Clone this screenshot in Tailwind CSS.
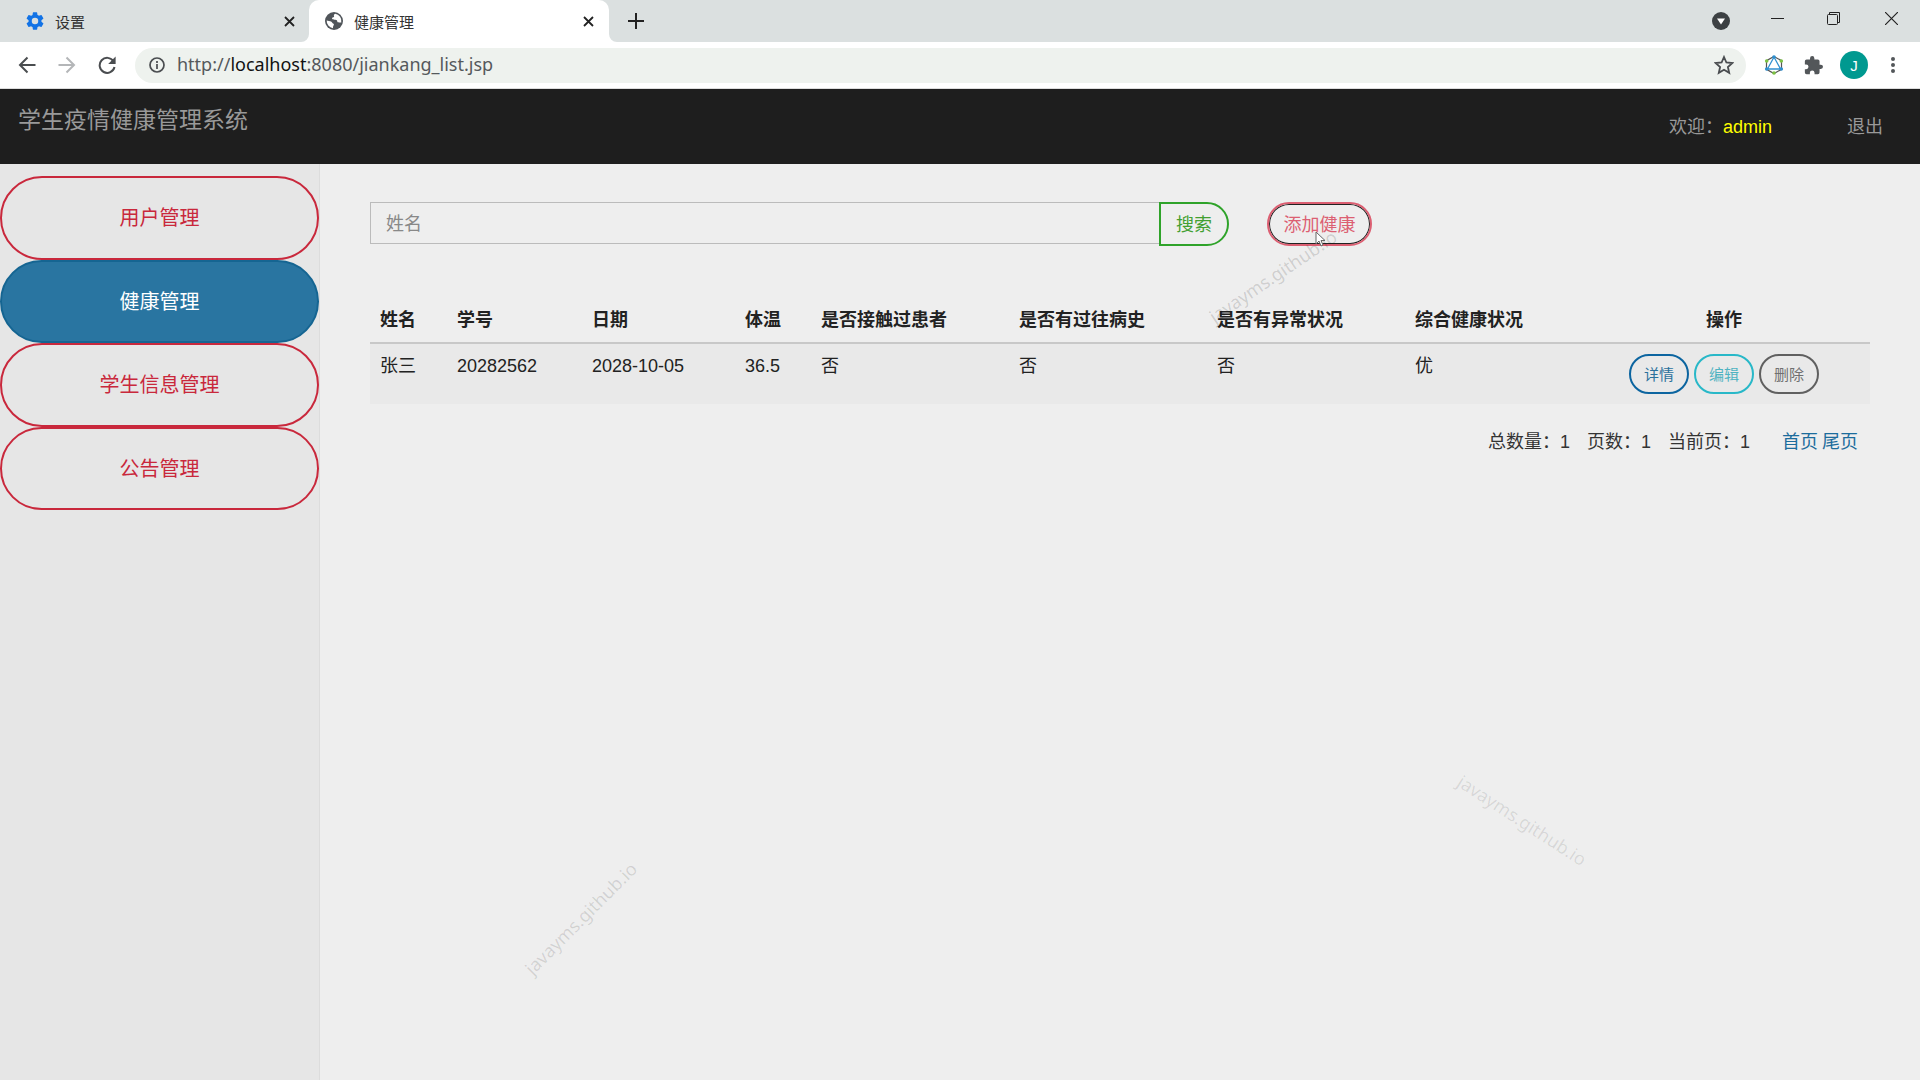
<!DOCTYPE html>
<html lang="zh-CN">
<head>
<meta charset="utf-8">
<title>健康管理</title>
<script src="https://cdn.jsdelivr.net/npm/@tailwindcss/browser@4"></script>
</head>
<body class="relative flex min-h-screen flex-col overflow-x-hidden bg-[#eeeeee] font-['Liberation_Sans','Noto_Sans_CJK_SC',sans-serif] text-[18px] leading-[25px] text-[#222222]">

<!-- Tab strip -->
<div class="flex h-[42px] items-start bg-[#dbe0e0] text-[15px] text-[#333333]">
  <div class="flex h-[42px] w-[309px] items-center pr-[10px] pl-[26px]">
    <svg class="size-[18px]" viewBox="2 2 20 20" fill="#1273e6" aria-hidden="true"><path d="M19.14 12.94c.04-.3.06-.61.06-.94s-.02-.64-.07-.94l2.03-1.58a.49.49 0 0 0 .12-.61l-1.92-3.32a.49.49 0 0 0-.59-.22l-2.39.96a7 7 0 0 0-1.62-.94l-.36-2.54a.48.48 0 0 0-.48-.41h-3.84a.47.47 0 0 0-.47.41l-.36 2.54c-.59.24-1.13.57-1.62.94l-2.39-.96a.48.48 0 0 0-.59.22L2.74 8.87a.48.48 0 0 0 .12.61l2.03 1.58a5.8 5.8 0 0 0 0 1.88l-2.03 1.58a.49.49 0 0 0-.12.61l1.92 3.32c.12.22.37.29.59.22l2.39-.96c.5.38 1.03.7 1.62.94l.36 2.54c.05.24.24.41.48.41h3.84c.24 0 .44-.17.47-.41l.36-2.54a7 7 0 0 0 1.62-.94l2.39.96c.22.08.47 0 .59-.22l1.92-3.32a.48.48 0 0 0-.12-.61zM12 15.6a3.6 3.6 0 1 1 0-7.2 3.6 3.6 0 0 1 0 7.2z"/></svg>
    <span class="ml-[11px] flex-1 pt-0.5">设置</span>
    <button aria-label="关闭" class="p-1"><svg class="size-[11px]" viewBox="0 0 11 11" stroke="#222" stroke-width="1.8"><path d="M1 1l9 9M10 1l-9 9"/></svg></button>
  </div>
  <div class="relative flex h-[42px] w-[300px] items-center rounded-t-[10px] bg-white pr-[11px] pl-4">
    <svg class="absolute bottom-0 -left-2 size-2" viewBox="0 0 8 8" fill="#fff" aria-hidden="true"><path d="M8 0v8H0a8 8 0 0 0 8-8z"/></svg>
    <svg class="absolute -right-2 bottom-0 size-2" viewBox="0 0 8 8" fill="#fff" aria-hidden="true"><path d="M0 0v8h8a8 8 0 0 1-8-8z"/></svg>
    <svg class="size-[18px]" viewBox="0 0 18 18" aria-hidden="true"><circle cx="9" cy="9" r="9" fill="#50555a"/><path d="M10.2 1.8C9 2.500 8.600 3.200 9 4c.4.9-.3 1.400-1.200 1.500-1 .1-.9 1-.5 1.600.5.7 1.800.6 3 .6 1.500.1 2 .9 2 1.900 0 .9 1.200.8 2.300.8h1.700A7.300 7.300 0 0 0 10.200 1.800zM1.700 8.500c1.400.6 3.300.6 4.300.9 1.200.4 1 1.600 2 2 .8.4 1.200.9.7 1.800-.4.8-.9 1.600-.7 3A7.300 7.300 0 0 1 1.700 8.500z" fill="#fff"/></svg>
    <span class="ml-[11px] flex-1 pt-0.5">健康管理</span>
    <button aria-label="关闭" class="p-1"><svg class="size-[11px]" viewBox="0 0 11 11" stroke="#222" stroke-width="1.8"><path d="M1 1l9 9M10 1l-9 9"/></svg></button>
  </div>
  <button aria-label="新标签页" class="ml-[19px] flex h-[42px] items-center"><svg class="size-4" viewBox="0 0 16 16" stroke="#222" stroke-width="2"><path d="M8 0v16M0 8h16"/></svg></button>
  <div class="ml-auto flex h-[37px] items-center pr-[22px]">
    <button aria-label="搜索标签页" class="mr-[41px] pt-1"><svg class="size-[18px]" viewBox="0 0 18 18"><circle cx="9" cy="9" r="9" fill="#3c4043"/><path d="M5 6.5h8L9 12.5z" fill="#fff"/></svg></button>
    <button aria-label="最小化" class="mr-[43px]"><svg class="size-[13px]" viewBox="0 0 13 13" stroke="#222"><path d="M0 6.5h13"/></svg></button>
    <button aria-label="还原" class="mr-[45px]"><svg class="size-[13px]" viewBox="0 0 13 13" stroke="#222" fill="none"><rect x=".5" y="2.5" width="10" height="10" rx="1"/><path d="M2.500 2.500v-2h10v10h-2"/></svg></button>
    <button aria-label="关闭窗口"><svg class="size-[13px]" viewBox="0 0 13 13" stroke="#222" stroke-width="1.2"><path d="M0 0l13 13M13 0L0 13"/></svg></button>
  </div>
</div>

<!-- Address bar -->
<div class="flex h-[47px] items-center border-b border-[#dddddd] bg-white pr-[19px] pl-[18px]">
  <button aria-label="后退"><svg class="size-[18px]" viewBox="0 0 18 18" fill="none" stroke="#4a4d50" stroke-width="2"><path d="M17.500 9H2M9.500 1.500L2 9l7.500 7.500"/></svg></button>
  <button aria-label="前进" class="ml-[22px]"><svg class="size-[18px]" viewBox="0 0 18 18" fill="none" stroke="#b4b6b8" stroke-width="2"><path d="M.5 9H16M8.500 1.500L16 9l-7.500 7.500"/></svg></button>
  <button aria-label="刷新" class="ml-[22px]"><svg class="size-[18px]" viewBox="0 0 18 18"><path d="M15.500 5.300A7.500 7.500 0 1 0 16.500 11" fill="none" stroke="#4a4d50" stroke-width="2"/><path d="M17.600.6V8h-7.400z" fill="#4a4d50"/></svg></button>
  <div class="ml-[19px] flex h-[35px] flex-1 items-center rounded-full bg-[#eef2ee] pr-3 pl-[14px]">
    <svg class="size-4" viewBox="0 0 16 16" fill="none" stroke="#4a4d50" stroke-width="1.7" aria-hidden="true"><circle cx="8" cy="8" r="7"/><path d="M8 7v5M8 4v2"/></svg>
    <span class="ml-[12px] flex-1 pb-0.5 font-['Noto_Sans'] text-[18px] text-[#55595c]">http://<span class="text-[#111111]">localhost</span>:8080/jiankang_list.jsp</span>
    <button aria-label="收藏"><svg class="size-[20px]" viewBox="2 2 20 20" fill="none" stroke="#4a4d50" stroke-width="1.8"><path d="M12 4l2.400 5.500 6 .5-4.500 4 1.300 5.800L12 16.700l-5.200 3.100L8.100 14 3.600 10l6-.5z"/></svg></button>
  </div>
  <button aria-label="扩展" class="ml-[18px]"><svg class="size-[20px]" viewBox="0 0 20 20" fill="none"><path d="M10 1.500l7.500 4.200v8.600L10 18.500l-7.500-4.200V5.700z" stroke="#555" stroke-width="1.2"/><path d="M10 2L3.500 14h13z" stroke="#3090d0" stroke-width="1.3"/><g fill="#2f8fd0"><circle cx="10" cy="2" r="1.8"/><circle cx="2.7" cy="14" r="1.8"/><circle cx="17.3" cy="14" r="1.8"/></g><g fill="#7cc242"><circle cx="2.7" cy="6" r="1.8"/><circle cx="17.3" cy="6" r="1.8"/><circle cx="10" cy="18" r="1.8"/></g></svg></button>
  <button aria-label="扩展程序" class="ml-[20px]"><svg class="size-[19px]" viewBox="1 1 22 22" fill="#53575a"><path d="M20.500 11H19V7a2 2 0 0 0-2-2h-4V3.500a2.500 2.500 0 0 0-5 0V5H4a2 2 0 0 0-2 2v3.800h1.500a2.700 2.700 0 0 1 0 5.400H2V20a2 2 0 0 0 2 2h3.800v-1.500a2.700 2.700 0 0 1 5.400 0V22H17a2 2 0 0 0 2-2v-4h1.500a2.500 2.500 0 0 0 0-5z"/></svg></button>
  <button aria-label="用户" class="ml-[17px] size-[28px] rounded-full bg-[#009990] text-[15px] text-white">J</button>
  <button aria-label="菜单" class="ml-[17px]"><svg class="h-[18px] w-[16px]" viewBox="0 0 16 18" fill="#53575a"><circle cx="8" cy="3" r="2"/><circle cx="8" cy="9" r="2"/><circle cx="8" cy="15" r="2"/></svg></button>
</div>

<!-- Site header -->
<header class="flex h-[75px] items-center bg-[#1e1e1e] pr-[37px] pl-[18px] text-[#999999]">
  <h1 class="pb-3 text-[23px]">学生疫情健康管理系统</h1>
  <div class="ml-auto flex items-center pt-0.5">
    <span>欢迎：<span class="text-[#ffff00]">admin</span></span>
    <a href="#" class="ml-[75px]">退出</a>
  </div>
</header>

<div class="flex flex-1">
  <nav class="w-[320px] shrink-0 border-r border-[#dcdcdc] bg-[#e6e6e6] pt-3 text-[20px]">
    <div class="grid h-[334px] grid-rows-4">
      <a href="#" class="flex items-center justify-center rounded-full border-2 border-[#c9283c] pt-0.5 text-[#c9283c]">用户管理</a>
      <a href="#" class="flex items-center justify-center rounded-full border-2 border-[#156592] bg-[#2975a1] pt-0.5 text-white">健康管理</a>
      <a href="#" class="flex items-center justify-center rounded-full border-2 border-[#c9283c] pt-0.5 text-[#c9283c]">学生信息管理</a>
      <a href="#" class="flex items-center justify-center rounded-full border-2 border-[#c9283c] pt-0.5 text-[#c9283c]">公告管理</a>
    </div>
  </nav>

  <main class="min-w-0 flex-1 pt-[38px] pr-[50px] pl-[50px]">
    <form class="flex items-start">
      <div class="flex w-[859px] items-start">
        <input type="text" aria-label="姓名" placeholder="姓名" class="h-[42px] min-w-0 flex-1 border border-r-0 border-[#bbbbbb] px-[15px] pt-0.5 placeholder:text-[#888888]">
        <button type="submit" class="h-[44px] w-[70px] rounded-r-full border-2 border-[#2fa32a] pt-0.5 text-[#43a032]">搜索</button>
      </div>
      <button type="button" class="ml-[38px] h-[44px] w-[105px] rounded-full border-2 border-[#dc5f72] pt-0.5 text-[#dc5f72] inset-ring inset-ring-[#222222]">添加健康</button>
    </form>

    <table class="mt-[48px] w-full table-fixed text-left">
      <colgroup>
        <col class="w-[77px]"><col class="w-[135px]"><col class="w-[153px]"><col class="w-[76px]"><col class="w-[198px]"><col class="w-[198px]"><col class="w-[198px]"><col class="w-[173px]"><col class="w-[292px]">
      </colgroup>
      <thead>
        <tr class="h-[49px] border-b-2 border-[#c8c8c8]">
          <th class="px-[10px] pt-1">姓名</th><th class="px-[10px] pt-1">学号</th><th class="px-[10px] pt-1">日期</th><th class="px-[10px] pt-1">体温</th><th class="px-[10px] pt-1">是否接触过患者</th><th class="px-[10px] pt-1">是否有过往病史</th><th class="px-[10px] pt-1">是否有异常状况</th><th class="px-[10px] pt-1">综合健康状况</th><th class="px-[10px] pt-1 text-center">操作</th>
        </tr>
      </thead>
      <tbody>
        <tr class="h-[60px] bg-[#e9e9e9] align-top">
          <td class="p-[10px]">张三</td><td class="p-[10px]">20282562</td><td class="p-[10px]">2028-10-05</td><td class="p-[10px]">36.5</td><td class="p-[10px]">否</td><td class="p-[10px]">否</td><td class="p-[10px]">否</td><td class="p-[10px]">优</td>
          <td class="p-[10px]">
            <div class="flex justify-center gap-[5px] text-[15px]">
              <button class="h-[40px] w-[60px] rounded-full border-2 border-[#0c65a0] text-[#2b719c]">详情</button>
              <button class="h-[40px] w-[60px] rounded-full border-2 border-[#28b8c8] text-[#4fb3c1]">编辑</button>
              <button class="h-[40px] w-[60px] rounded-full border-2 border-[#606060] text-[#707070]">删除</button>
            </div>
          </td>
        </tr>
      </tbody>
    </table>

    <div class="mt-[26px] flex justify-end pr-3 text-[#333333]">
      <span>总数量：1</span>
      <span class="ml-[17px]">页数：1</span>
      <span class="ml-[17px]">当前页：1</span>
      <a href="#" class="ml-[32px] text-[#1c6c9c]">首页</a>
      <a href="#" class="ml-[4px] text-[#1c6c9c]">尾页</a>
    </div>
  </main>
</div>

<!-- Watermarks and pointer -->
<div class="pointer-events-none absolute top-[264px] left-[1193px] w-[160px] -rotate-34 text-center font-['Noto_Sans'] text-[18px] text-black/15">javayms.github.io</div>
<div class="pointer-events-none absolute top-[906px] left-[501px] w-[160px] -rotate-45 text-center font-['Noto_Sans'] text-[18px] text-black/12">javayms.github.io</div>
<div class="pointer-events-none absolute top-[808px] left-[1442px] w-[160px] rotate-33 text-center font-['Noto_Sans'] text-[18px] text-black/10">javayms.github.io</div>
<svg class="pointer-events-none absolute top-[231px] left-[1315px] h-[16px] w-[11px]" viewBox="0 0 11 16" fill="#fff" stroke="#666" aria-hidden="true"><path d="M1 1v12l3-3 2 5 2-1-2-4.500h4z"/></svg>
</body>
</html>
